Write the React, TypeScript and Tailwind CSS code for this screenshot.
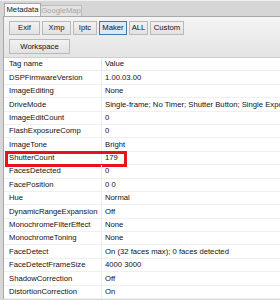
import React from "react";

const rows: [string, string][] = [
  ["DSPFirmwareVersion", "1.00.03.00"],
  ["ImageEditing", "None"],
  ["DriveMode", "Single-frame; No Timer; Shutter Button; Single Exposure"],
  ["ImageEditCount", "0"],
  ["FlashExposureComp", "0"],
  ["ImageTone", "Bright"],
  ["ShutterCount", "179"],
  ["FacesDetected", "0"],
  ["FacePosition", "0 0"],
  ["Hue", "Normal"],
  ["DynamicRangeExpansion", "Off"],
  ["MonochromeFilterEffect", "None"],
  ["MonochromeToning", "None"],
  ["FaceDetect", "On (32 faces max); 0 faces detected"],
  ["FaceDetectFrameSize", "4000 3000"],
  ["ShadowCorrection", "Off"],
  ["DistortionCorrection", "On"],
];

const buttons = [
  { label: "Exif", w: "w-[31px]" },
  { label: "Xmp", w: "w-[29px]" },
  { label: "Iptc", w: "w-[24px]" },
  { label: "Maker", w: "w-[28px]", active: true },
  { label: "ALL", w: "w-[19px]" },
  { label: "Custom", w: "w-[34px]" },
];

const ToolButton = ({ label, w, active }: { label: string; w: string; active?: boolean }) => (
  <div
    className={`${w} h-[14px] shrink-0 flex items-center justify-center border ${
      active ? "border-[#3d7bb0] bg-[#dce9f6]" : "border-[#b9b9b9] bg-gradient-to-b from-[#f2f2f2] to-[#e2e2e2]"
    }`}
  >
    {label}
  </div>
);

export default function App() {
  return (
    <div
      className="w-[280px] h-[300px] overflow-hidden bg-[#d6d6d6] text-[7.7px] leading-none text-[#111]"
      style={{ fontFamily: '"Liberation Sans", Arial, sans-serif' }}
    >
      {/* tabs */}
      <div className="h-[16px] flex items-end pl-[4px] border-t border-[#efefef]">
        <div className="h-[13px] w-[37px] flex items-center justify-center bg-[#fafafa] border border-b-0 border-[#a9a9a9] text-[#222]">
          Metadata
        </div>
        <div className="h-[11px] w-[41px] flex items-center justify-center bg-[#e3e3e3] border border-b-0 border-l-0 border-[#bdbdbd] text-[#a6a6a6]">
          GoogleMap
        </div>
      </div>

      <div className="ml-[3px] border-l border-t border-[#a9a9a9] bg-[#fbfbfb]">
        {/* toolbar */}
        <div className="h-[41px] bg-gradient-to-b from-[#f4f4f4] to-[#e4e4e4] pl-[5px] pt-[4px] border-b border-[#cfcfcf]">
          <div className="flex gap-[2px]">
            {buttons.map((b) => (
              <ToolButton key={b.label} {...b} />
            ))}
          </div>
          <div className="mt-[4px] w-[61px] h-[15px] flex items-center justify-center border border-[#b9b9b9] bg-gradient-to-b from-[#f2f2f2] to-[#e2e2e2]">
            Workspace
          </div>
        </div>

        {/* table */}
        <div className="bg-white">
          <div className="flex h-[13.4px] items-center border-b border-[#ececec]">
            <div className="w-[98px] shrink-0 pl-[5px] border-r border-[#e4e4e4] h-full flex items-center">Tag name</div>
            <div className="pl-[3px] whitespace-nowrap">Value</div>
          </div>
          {rows.map(([k, v]) => (
            <div key={k} className="relative flex h-[13.4px] items-center border-b border-[#efefef]">
              <div className="w-[98px] shrink-0 pl-[5px] border-r border-[#ececec] h-full flex items-center whitespace-nowrap">
                {k}
              </div>
              <div className="pl-[3px] whitespace-nowrap">{v}</div>
              {k === "ShutterCount" && (
                <span className="absolute left-[1px] top-[-1px] w-[122px] h-[16px] border-[3px] border-[#e8121e]" />
              )}
            </div>
          ))}
        </div>
      </div>
    </div>
  );
}
